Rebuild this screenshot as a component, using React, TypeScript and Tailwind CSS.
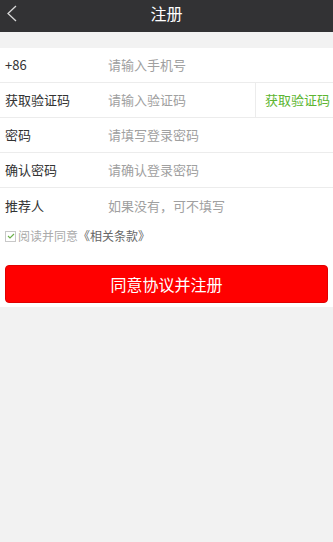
import React from "react";

const font = { fontFamily: '"Noto Sans CJK SC", "Liberation Sans", sans-serif' };

const Row = ({ label, placeholder, last }: { label: string; placeholder: string; last?: boolean }) => (
  <div className={`flex items-center h-[35px] ${last ? "" : "border-b border-[#ececec]"}`}>
    <span className="w-[108px] pl-[5px] text-[13px] text-[#333]">{label}</span>
    <span className="text-[13px] text-[#a0a0a0]">{placeholder}</span>
  </div>
);

const App: React.FC = () => {
  return (
    <div className="w-[333px] h-[542px] bg-[#f2f2f2]" style={font}>
      <div className="relative flex items-center justify-center h-[32px] pb-[6px] bg-[#323234]">
        <svg className="absolute left-[6px] top-[4px]" width="12" height="20" viewBox="0 0 12 20">
          <path d="M10 2 L2 9.5 L10 17" fill="none" stroke="#d8d8d8" strokeWidth="1.3" />
        </svg>
        <span className="text-white text-[16px] leading-none">注册</span>
      </div>
      <div className="h-[16px]" />
      <div className="bg-white pb-[4px]">
        <Row label="+86" placeholder="请输入手机号" />
        <div className="flex items-center h-[35px] border-b border-[#ececec]">
          <span className="w-[108px] pl-[5px] text-[13px] text-[#333]">获取验证码</span>
          <span className="flex-1 text-[13px] text-[#a0a0a0]">请输入验证码</span>
          <div className="h-full w-[78px] border-l border-[#ececec] flex items-center pl-[9px] text-[13px] text-[#5cb531] whitespace-nowrap overflow-hidden">
            获取验证码
          </div>
        </div>
        <Row label="密码" placeholder="请填写登录密码" />
        <Row label="确认密码" placeholder="请确认登录密码" />
        <Row label="推荐人" placeholder="如果没有，可不填写" last />
        <div className="flex items-center h-[22px] pl-[5px] mt-[2px]">
          <span className="w-[11px] h-[11px] border border-[#c8c8c8] bg-white flex items-center justify-center mr-[2px]">
            <svg width="8" height="6" viewBox="0 0 8 6">
              <path d="M1 3 L3 5 L7 1" fill="none" stroke="#6cb04a" strokeWidth="1.1" />
            </svg>
          </span>
          <span className="text-[12px] text-[#aaa]">阅读并同意</span>
          <span className="text-[12px] text-[#666]">《相关条款》</span>
        </div>
        <div className="px-[5px] pt-[18px]">
          <div className="h-[38px] rounded-[4px] bg-[#ff0000] border border-[#e00000] flex items-center justify-center text-white text-[16px]">
            同意协议并注册
          </div>
        </div>
      </div>
    </div>
  );
};

export default App;
